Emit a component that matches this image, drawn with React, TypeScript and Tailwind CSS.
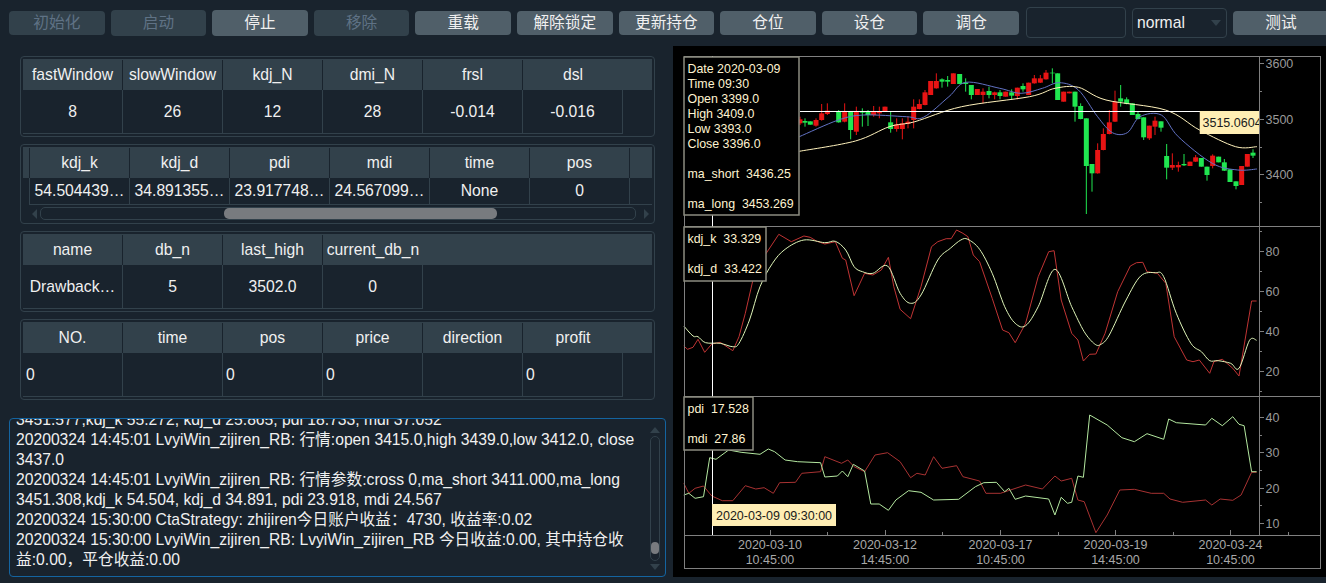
import type { ReactNode } from "react";

type Candle = [number, number, number, number?, number?];
type Pt = [number, number];

const buttons: { label: string; disabled?: boolean; tall?: boolean }[] = [
  { label: "初始化", disabled: true },
  { label: "启动", disabled: true, tall: true },
  { label: "停止", tall: true },
  { label: "移除", disabled: true, tall: true },
  { label: "重载" },
  { label: "解除锁定" },
  { label: "更新持仓" },
  { label: "仓位" },
  { label: "设仓" },
  { label: "调仓" },
];

// candle data, read off the chart: x, body top, body bottom, wick top, wick bottom
const redA: Candle[] = [
  [0, 178, 190, 170, 195], [48, 180, 197, 175, 200], [65, 160, 180, 132, 182], [82, 152, 162, 130, 165],
  [134, 155, 185, 130, 187], [169, 155, 215, 140, 225], [221, 155, 165, 138, 170], [238, 155, 160, 140, 175],
  [255, 140, 155], [290, 193, 207, 175, 215], [307, 190, 207, 175, 238], [324, 185, 192, 170, 205],
  [341, 140, 180, 118, 205], [358, 132, 147, 118, 148], [375, 97, 135, 90, 136], [392, 63, 105], [409, 63, 85, 40, 86],
  [460, 40, 72], [532, 87, 105], [549, 95, 105, 85, 130], [584, 97, 105, 95, 118], [617, 95, 110],
  [652, 83, 108, 83, 118], [686, 68, 105], [703, 55, 70, 45, 71], [721, 55, 68, 45, 69], [738, 38, 58, 30, 59],
];
const greenA: Candle[] = [
  [15, 183, 188, 175, 200], [31, 184, 194], [116, 155, 187, 150, 188], [152, 155, 210, 155, 238], [187, 155, 158, 145, 200],
  [204, 155, 165, 150, 198], [272, 187, 207, 155, 218], [426, 58, 65, 55, 83], [443, 60, 65, 48, 80], [479, 42, 72],
  [497, 68, 72, 55, 95], [514, 75, 105, 75, 118], [567, 93, 105, 80, 115], [600, 97, 108, 90, 118],
  [635, 97, 107, 88, 118], [669, 78, 88, 70, 95], [757, 38, 40, 25, 70], [773, 40, 120],
];
const redB: Candle[] = [
  [11, 95, 125], [28, 95, 100], [113, 270, 340, 250, 341], [130, 222, 270, 205, 271], [148, 187, 222, 150, 223],
  [165, 125, 185, 92, 186], [268, 197, 235, 197, 240], [285, 182, 200, 170, 225], [337, 315, 323, 280, 330],
  [355, 315, 322, 305, 335], [390, 305, 318], [407, 292, 305, 285, 306], [458, 287, 318, 283, 325],
  [545, 318, 375], [562, 282, 320],
];
const greenB: Candle[] = [
  [45, 95, 140, 95, 185], [62, 138, 177, 130, 178], [79, 175, 318, 175, 462], [96, 312, 340, 312, 395],
  [182, 115, 125, 75, 140], [200, 118, 132, 112, 133], [217, 130, 165], [234, 162, 177, 155, 178], [251, 172, 232, 172, 240],
  [303, 184, 203, 184, 215], [320, 288, 323, 252, 358], [372, 312, 316, 282, 318], [424, 294, 320], [441, 320, 345, 320, 362],
  [476, 290, 307], [493, 307, 332, 297, 333], [510, 328, 366], [528, 364, 378, 364, 388], [579, 278, 287, 268, 294],
];

const maLong: Pt[] = [[328,454],[460,423],[540,380],[600,365],[710,320],[870,290],[930,265],[985,262],[1050,300],[1190,330],[1270,390],[1355,440],[1405,440]];
const maShort: Pt[] = [[328,410],[420,360],[480,345],[580,350],[620,352],[680,290],[720,247],[800,265],[850,280],[900,265],[940,248],[985,270],[1030,350],[1065,398],[1100,398],[1130,350],[1180,345],[1220,410],[1300,490],[1360,510],[1405,507]];
const kdjK: Pt[] = [[33,378],[42,388],[55,382],[67,358],[83,397],[100,372],[120,367],[150,392],[165,350],[180,280],[200,170],[230,100],[260,43],[290,65],[320,48],[335,52],[350,63],[370,72],[395,65],[412,115],[420,120],[440,227],[465,160],[485,165],[505,150],[522,112],[535,200],[550,268],[575,296],[600,200],[625,80],[640,65],[660,56],[672,56],[685,30],[700,40],[712,50],[725,105],[740,125],[770,235],[795,330],[810,338],[825,368],[850,310],[880,170],[905,95],[918,92],[935,240],[960,340],[975,360],[988,423],[1003,403],[1018,402],[1040,340],[1070,215],[1100,138],[1115,128],[1130,127],[1140,155],[1165,160],[1185,190],[1205,350],[1235,420],[1250,425],[1265,420],[1290,460],[1300,425],[1320,418],[1345,445],[1360,468],[1390,243],[1402,243]];
const kdjD: Pt[] = [[33,318],[55,348],[67,350],[85,368],[120,370],[150,380],[165,370],[190,300],[215,200],[245,130],[275,88],[320,60],[370,68],[395,64],[420,90],[440,140],[460,155],[485,160],[520,138],[550,220],[575,250],[600,225],[640,120],[670,85],[695,60],[712,58],[740,88],[770,160],[800,260],[825,310],[850,317],[880,260],[920,148],[960,260],[990,335],[1015,372],[1030,373],[1050,345],[1090,240],[1125,168],[1160,158],[1180,170],[1210,280],[1245,370],[1270,395],[1290,422],[1310,422],[1340,430],[1360,445],[1385,361],[1402,361]];
const pdi: Pt[] = [[33,300],[45,295],[60,310],[80,305],[95,188],[110,193],[140,165],[170,172],[215,178],[235,162],[250,170],[275,195],[305,200],[360,203],[370,246],[400,243],[412,228],[425,245],[438,208],[465,228],[480,327],[500,327],[522,346],[540,315],[570,287],[600,292],[630,315],[690,313],[730,275],[750,263],[780,262],[800,290],[810,280],[825,313],[850,303],[905,312],[920,360],[935,307],[950,325],[960,322],[975,243],[988,247],[1003,60],[1045,90],[1080,128],[1110,140],[1140,116],[1180,133],[1192,72],[1210,83],[1280,90],[1295,70],[1320,92],[1345,65],[1360,88],[1372,92],[1390,230],[1402,230]];
const mdi: Pt[] = [[33,265],[45,295],[60,280],[80,273],[100,303],[125,317],[150,317],[180,272],[205,282],[225,278],[247,295],[262,263],[300,262],[315,235],[360,230],[370,185],[410,205],[425,195],[440,215],[465,230],[490,180],[520,173],[550,200],[575,248],[590,235],[610,240],[630,185],[650,220],[685,212],[700,245],[740,258],[755,295],[790,295],[850,270],[890,282],[920,243],[935,258],[960,250],[975,315],[990,320],[1018,413],[1045,360],[1075,285],[1110,283],[1150,295],[1180,295],[1195,312],[1225,322],[1280,315],[1295,330],[1315,312],[1345,316],[1365,300],[1390,232],[1402,232]];

const toPage = (pts: Pt[], ox: number, sx: number, oy: number): Pt[] => pts.map(([x, y]) => [ox + x / sx, oy + y / 3]);

const toPoints = (pts: Pt[], ox: number, sx: number, oy: number) =>
  toPage(pts, ox, sx, oy).map(([x, y]) => `${x.toFixed(1)},${y.toFixed(1)}`).join(" ");

// catmull-rom through the points, the averaged lines are curves in the picture
const toSmooth = (raw: Pt[], ox: number, sx: number, oy: number) => {
  const p = toPage(raw, ox, sx, oy);
  let d = `M${p[0][0].toFixed(1)} ${p[0][1].toFixed(1)}`;
  for (let i = 0; i < p.length - 1; i++) {
    const a = p[Math.max(i - 1, 0)];
    const b = p[i];
    const c = p[i + 1];
    const e = p[Math.min(i + 2, p.length - 1)];
    const c1x = b[0] + (c[0] - a[0]) / 6;
    const c1y = b[1] + (c[1] - a[1]) / 6;
    const c2x = c[0] - (e[0] - b[0]) / 6;
    const c2y = c[1] - (e[1] - b[1]) / 6;
    d += `C${c1x.toFixed(1)} ${c1y.toFixed(1)} ${c2x.toFixed(1)} ${c2y.toFixed(1)} ${c[0].toFixed(1)} ${c[1].toFixed(1)}`;
  }
  return d;
};

function Candles({ data, ox, color }: { data: Candle[]; ox: number; color: string }) {
  return (
    <g fill={color} stroke={color}>
      {data.map(([x, top, bottom, wickTop, wickBottom]) => {
        const cx = ox + x / 3;
        const y1 = 60 + (wickTop ?? top) / 3;
        const y2 = 60 + (wickBottom ?? bottom) / 3;
        return (
          <g key={x}>
            <line x1={cx} x2={cx} y1={y1} y2={y2} strokeWidth={1} />
            <rect x={cx - 2.5} y={60 + top / 3} width={5} height={(bottom - top) / 3} stroke="none" />
          </g>
        );
      })}
    </g>
  );
}

function Legend({ x, y, w, h, lines }: { x: number; y: number; w: number; h: number; lines: [string, number][] }) {
  return (
    <g>
      <rect x={x} y={y} width={w} height={h} fill="#000" stroke="#8c8c80" strokeWidth={1.5} />
      {lines.map(([text, ly]) => (
        <text key={text} x={x + 3.5} y={ly + 4} fontSize={12.4} fill="#fff3d0" xmlSpace="preserve">
          {text}
        </text>
      ))}
    </g>
  );
}

function Chart() {
  const ax = "#808080";
  const yLabels: [string, number][] = [
    ["3600", 63], ["3500", 119.5], ["3400", 174.5],
    ["80", 251], ["60", 291], ["40", 331], ["20", 371],
    ["40", 417], ["30", 452], ["20", 488], ["10", 523],
  ];
  const minor = [91, 147, 202, 231, 271, 311, 351, 391, 435, 470, 505];
  const dates: [number, string, string][] = [
    [770, "2020-03-10", "10:45:00"],
    [885, "2020-03-12", "14:45:00"],
    [1000.5, "2020-03-17", "10:45:00"],
    [1115.5, "2020-03-19", "14:45:00"],
    [1230.5, "2020-03-24", "10:45:00"],
  ];
  return (
    <svg viewBox="673 46 653 531" className="block h-[531px] w-[653px] bg-black">
      <Candles data={redA} ox={800} color="#e81414" />
      <Candles data={greenA} ox={800} color="#20e650" />
      <Candles data={redB} ox={1060} color="#e81414" />
      <Candles data={greenB} ox={1060} color="#20e650" />
      <path d={toSmooth(maShort, 660, 2.354, 0)} fill="none" stroke="#6272c4" strokeWidth={1} />
      <path d={toSmooth(maLong, 660, 2.354, 0)} fill="none" stroke="#fff2bc" strokeWidth={1} />
      <polyline points={toPoints(kdjK, 670, 2.39, 220)} fill="none" stroke="#c03434" strokeWidth={1} />
      <path d={toSmooth(kdjD, 670, 2.39, 220)} fill="none" stroke="#dff5b8" strokeWidth={1} />
      <polyline points={toPoints(mdi, 670, 2.39, 395)} fill="none" stroke="#a83232" strokeWidth={1} />
      <polyline points={toPoints(pdi, 670, 2.39, 395)} fill="none" stroke="#b4e8a0" strokeWidth={1} />

      <g stroke={ax} strokeWidth={1} shapeRendering="crispEdges" fill="none">
        <rect x={684} y={56} width={636} height={512} />
        <line x1={684} x2={1320} y1={226} y2={226} />
        <line x1={684} x2={1320} y1={396} y2={396} />
        <line x1={684} x2={1320} y1={535} y2={535} />
        <line x1={1259} x2={1259} y1={56} y2={535} />
        {yLabels.map(([, y], i) => (
          <line key={i} x1={1259} x2={1264} y1={y} y2={y} />
        ))}
        {minor.map((y) => (
          <line key={y} x1={1259} x2={1262} y1={y} y2={y} />
        ))}
        {dates.map(([x]) => (
          <line key={x} x1={x} x2={x} y1={530} y2={535} />
        ))}
        {dates.map(([x]) => (
          <line key={x} x1={x + 57.5} x2={x + 57.5} y1={532} y2={535} />
        ))}
      </g>

      <g stroke="#fff" strokeWidth={1} shapeRendering="crispEdges">
        <line x1={800} x2={1259} y1={111} y2={111} />
        <line x1={712} x2={712} y1={56} y2={535} />
      </g>

      {yLabels.map(([label, y], i) => (
        <text key={i} x={1265.5} y={y + 4.5} fontSize={12.5} fill="#9a9a9a">
          {label}
        </text>
      ))}
      {dates.map(([x, d, t]) => (
        <g key={d} fontSize={12.5} fill="#a8a8a8" textAnchor="middle">
          <text x={x} y={549}>{d}</text>
          <text x={x} y={564}>{t}</text>
        </g>
      ))}

      <Legend
        x={684}
        y={57}
        w={115}
        h={158}
        lines={[
          ["Date 2020-03-09", 69], ["Time 09:30", 84], ["Open 3399.0", 99], ["High 3409.0", 114],
          ["Low 3393.0", 129], ["Close 3396.0", 144], ["ma_short  3436.25", 174], ["ma_long  3453.269", 204],
        ]}
      />
      <Legend x={684} y={227} w={82} h={54} lines={[["kdj_k  33.329", 239], ["kdj_d  33.422", 269]]} />
      <Legend x={684} y={397} w={69} h={53} lines={[["pdi  17.528", 409], ["mdi  27.86", 439]]} />

      <svg x={1199.5} y={111} width={59.5} height={23} viewBox="0 0 59.5 23">
        <rect width={59.5} height={23} fill="#ffeeb4" />
        <text x={3} y={16} fontSize={12.5} fill="#1a1a1a">3515.0604</text>
      </svg>
      <rect x={712} y={504} width={124} height={22} fill="#ffeeb4" />
      <text x={716} y={519.5} fontSize={12.5} fill="#1a1a1a">2020-03-09 09:30:00</text>
    </svg>
  );
}

function Panel({ className, children }: { className: string; children: ReactNode }) {
  return <div className={`w-[635px] rounded-[4px] border border-[#32414b] ${className}`}>{children}</div>;
}

function ParamTable({ columns, values, align = "center" }: { columns: string[]; values: string[]; align?: "center" | "left" }) {
  return (
    <>
      <div className="mx-[2px] mt-[2px] flex h-[31px] w-[629px] bg-[#32414b] pt-[1px]">
        {columns.map((c, i) => (
          <div
            key={c}
            className={`flex w-[100px] shrink-0 items-center justify-center whitespace-nowrap ${i < columns.length - 1 ? "border-r border-[#19232d]" : ""}`}
          >
            {c}
          </div>
        ))}
      </div>
      <div className="ml-[2px] flex h-[44px] w-fit border-b border-[#32414b]">
        {values.map((v, i) => (
          <div
            key={i}
            className={`flex w-[100px] shrink-0 items-center whitespace-nowrap border-r border-[#32414b] px-[3px] ${align === "center" ? "justify-center" : "justify-start"}`}
          >
            {v}
          </div>
        ))}
      </div>
    </>
  );
}

const logLines = [
  "3451.577,kdj_k 55.272, kdj_d 25.865, pdi 18.733, mdi 37.052",
  "20200324 14:45:01 LvyiWin_zijiren_RB: 行情:open 3415.0,high 3439.0,low 3412.0, close",
  "3437.0",
  "20200324 14:45:01 LvyiWin_zijiren_RB: 行情参数:cross 0,ma_short 3411.000,ma_long",
  "3451.308,kdj_k 54.504, kdj_d 34.891, pdi 23.918, mdi 24.567",
  "20200324 15:30:00 CtaStrategy: zhijiren今日账户收益：4730, 收益率:0.02",
  "20200324 15:30:00 LvyiWin_zijiren_RB: LvyiWin_zijiren_RB 今日收益:0.00, 其中持仓收",
  "益:0.00，平仓收益:0.00",
];

export default function App() {
  return (
    <div className="flex h-[583px] w-[1326px] flex-col overflow-hidden bg-[#19232d] font-['Liberation_Sans','Noto_Sans_CJK_SC',sans-serif] text-[15.7px] text-[#f0f0f0]">
      <div className="flex h-[46px] shrink-0 items-center gap-[6px] pb-[1px] pl-[9px]">
        {buttons.map((b) => (
          <button
            key={b.label}
            className={`w-[95.6px] shrink-0 rounded-[4px] ${b.tall ? "h-[26px]" : "h-[24px]"} ${b.disabled ? "bg-[#32414b] text-[#5f7285]" : "bg-[#505f69] text-[#f0f0f0]"}`}
          >
            {b.label}
          </button>
        ))}
        <div className="ml-[1px] h-[31px] w-[100px] shrink-0 rounded-[4px] border border-[#32414b]" />
        <div className="flex h-[30px] w-[95px] shrink-0 items-center justify-between rounded-[4px] border border-[#32414b] pl-[4px] pr-[5px]">
          normal
          <svg width="10" height="6" viewBox="0 0 10 6">
            <path d="M0 0h10L5 6z" fill="#32414b" />
          </svg>
        </div>
        <button className="h-[24px] w-[96px] shrink-0 rounded-[4px] bg-[#505f69]">测试</button>
      </div>

      <div className="flex min-h-0 flex-1">
        <div className="w-[673px] shrink-0">
          <div className="ml-[20px] flex flex-col gap-[7px] pt-[10px]">
            <Panel className="h-[81px]">
              <ParamTable columns={["fastWindow", "slowWindow", "kdj_N", "dmi_N", "frsl", "dsl"]} values={["8", "26", "12", "28", "-0.014", "-0.016"]} />
            </Panel>
            <Panel className="h-[80px]">
              <div className="mx-[2px] mt-[2px] flex h-[31px] w-[629px] bg-[#32414b] pl-[6px] pt-[1px]">
                {["kdj_k", "kdj_d", "pdi", "mdi", "time", "pos"].map((c) => (
                  <div key={c} className="flex w-[100px] shrink-0 items-center justify-center border-l border-[#19232d]">
                    {c}
                  </div>
                ))}
                <div className="w-[23px] border-l border-[#19232d]" />
              </div>
              <div className="ml-[8px] flex h-[27px] w-[623px] border-b border-[#32414b]">
                {["54.504439…", "34.891355…", "23.917748…", "24.567099…", "None", "0"].map((v, i) => (
                  <div key={i} className="flex w-[100px] shrink-0 items-center justify-center whitespace-nowrap border-l border-[#32414b]">
                    {v}
                  </div>
                ))}
                <div className="w-[23px] border-l border-[#32414b]" />
              </div>
              <div className="mt-[2px] flex h-[13px] items-center gap-[3px] pl-[11px]">
                <svg width="5" height="10" viewBox="0 0 5 10"><path d="M5 0v10L0 5z" fill="#32414b" /></svg>
                <div className="flex h-[13px] w-[596px] rounded-[5px] border border-[#32414b]">
                  <div className="ml-[183px] h-[11px] w-[273px] rounded-[5px] bg-[#787b7f]" />
                </div>
                <svg className="ml-[5px]" width="5" height="10" viewBox="0 0 5 10"><path d="M0 0v10l5-5z" fill="#32414b" /></svg>
              </div>
            </Panel>
            <Panel className="h-[81px]">
              <ParamTable columns={["name", "db_n", "last_high", "current_db_n"]} values={["Drawback…", "5", "3502.0", "0"]} />
            </Panel>
            <Panel className="h-[81px]">
              <ParamTable columns={["NO.", "time", "pos", "price", "direction", "profit"]} values={["0", "", "0", "0", "", "0"]} align="left" />
            </Panel>
          </div>

          <div className="relative ml-[9px] mt-[18px] h-[159px] w-[657px] overflow-hidden rounded-[4px] border border-[#1464a0]">
            <div className="-mt-[9px] pl-[6px] leading-[20px]">
              {logLines.map((l) => (
                <div key={l} className="whitespace-nowrap">{l}</div>
              ))}
            </div>
            <div className="absolute right-[5px] top-[8px] flex h-[143px] w-[10px] flex-col items-center justify-between">
              <svg width="10" height="6" viewBox="0 0 10 6"><path d="M0 6h10L5 0z" fill="#32414b" /></svg>
              <div className="flex h-[125px] w-[10px] flex-col justify-end rounded-[5px] border border-[#32414b]">
                <div className="mb-[6px] h-[12px] w-[8px] rounded-[4px] bg-[#787b7f]" />
              </div>
              <svg width="10" height="6" viewBox="0 0 10 6"><path d="M0 0h10L5 6z" fill="#32414b" /></svg>
            </div>
          </div>
        </div>
        <Chart />
      </div>
    </div>
  );
}
